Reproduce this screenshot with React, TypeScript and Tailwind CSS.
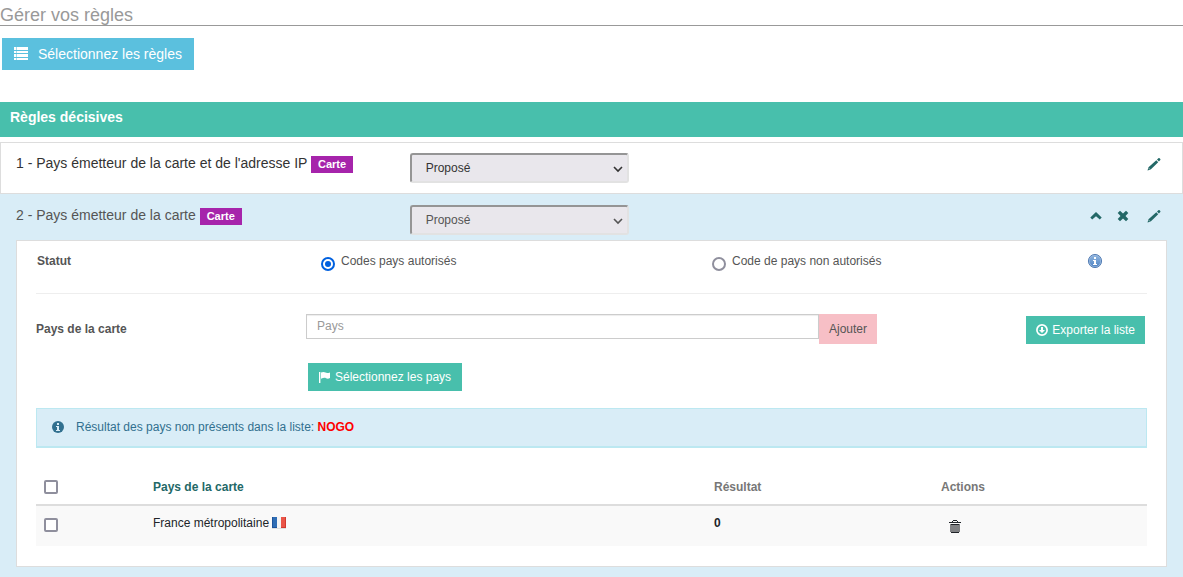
import type { ReactNode } from "react";

function ListIcon() {
  return (
    <svg className="size-3.5" viewBox="0 0 14 14" fill="currentColor" aria-hidden="true">
      <path d="M0 0h2v3H0zM3 0h11v3H3zM0 4h2v2H0zM3 4h11v2H3zM0 7h2v3H0zM3 7h11v3H3zM0 11h2v2H0zM3 11h11v2H3z" />
      <path d="M2 0h1v3H2zM2 4h1v2H2zM2 7h1v3H2zM2 11h1v2H2z" opacity=".45" />
    </svg>
  );
}

function PencilIcon() {
  return (
    <svg className="size-4" viewBox="0 0 16 16" fill="currentColor" aria-hidden="true">
      <path d="M1.500 14.500l1-3.300 7.800-7 1.900 2-7.500 7.200zM11 3.500l1.700-1.400q.5-.3.900.1l.7.800q.4.500 0 .9L12.900 5.500z" />
      <path d="M2.600 12l1.500 1.500" stroke="#fff" strokeWidth=".5" />
    </svg>
  );
}

function ChevronUpIcon() {
  return (
    <svg className="size-4" viewBox="0 0 16 16" fill="currentColor" aria-hidden="true">
      <path d="M8 4l5.700 5.400-1.900 2.200L8 8.200l-3.800 3.400-1.900-2.200z" />
    </svg>
  );
}

function CrossIcon() {
  return (
    <svg className="size-4" viewBox="0 0 16 16" fill="currentColor" aria-hidden="true">
      <path d="M5 2.700L8 5.500l3-2.800L13.300 5 10.500 8l2.800 3L11 13.300l-3-2.800-3 2.800L2.700 11l2.800-3-2.800-3z" />
    </svg>
  );
}

function InfoIcon() {
  return (
    <svg className="size-3" viewBox="0 0 12 12" aria-hidden="true">
      <circle cx="6" cy="6" r="6" fill="currentColor" />
      <path d="M5 2h2v2H5zM4 5h3v4h1v1H4V9h1V6H4z" fill="#d9edf7" />
    </svg>
  );
}

function HelpBadge() {
  return (
    <svg className="size-4" viewBox="0 0 16 16" aria-hidden="true">
      <defs>
        <linearGradient id="help-fill" x1="0" y1="0" x2="0" y2="1">
          <stop offset="0" stopColor="#8fb4de" />
          <stop offset="1" stopColor="#5387c5" />
        </linearGradient>
      </defs>
      <circle cx="8" cy="8" r="6.600" fill="#9dbbe0" stroke="#4a75ae" strokeWidth=".9" />
      <circle cx="8" cy="8" r="5.500" fill="url(#help-fill)" />
      <path d="M7 4h2v2H7zM6 7h3v4h1v1H6v-1h1V8H6z" fill="#fff" />
    </svg>
  );
}

function FlagIcon() {
  return (
    <svg className="size-3" viewBox="0 0 12 12" fill="currentColor" aria-hidden="true">
      <path d="M0 1h1v11H0zM2 1.600c2-1 3.500-.6 4.500 0s2.500.6 4.500-.2V7c-1.500.9-3 .8-4 .2S4.500 6.600 2 7.700z" />
      <path d="M1 1h1v11H1z" opacity=".4" />
    </svg>
  );
}

function DownloadIcon() {
  return (
    <svg className="size-3" viewBox="0 0 12 12" fill="none" aria-hidden="true">
      <circle cx="6" cy="6" r="5.100" stroke="currentColor" strokeWidth="1.700" />
      <path d="M5 3h2v3h2L6 9 3 6h2z" fill="currentColor" />
    </svg>
  );
}

function TrashIcon() {
  return (
    <svg className="h-4 w-3" viewBox="0 0 12 16" aria-hidden="true">
      <path d="M1 6h10v8H1z" fill="#808183" />
      <path d="M4 2h4v1H4zM0 4h12v1H0zM3 3h1v1H3zM8 3h1v1H8zM2 6h8v1H2zM2 14h8v1H2z" fill="#1f2328" />
    </svg>
  );
}

function FrenchFlag() {
  return (
    <svg className="inline-block h-3 w-3.5 align-[-2px]" viewBox="0 0 14 12" role="img" aria-label="France">
      <path d="M0 0h14v11H0z" fill="#f4f4f4" />
      <path d="M0 0h5v11H0z" fill="#2f6db5" />
      <path d="M9 0h5v11H9z" fill="#ea5548" />
      <path d="M0 0h1v11H0zM0 10h5v1H0z" fill="#1d539b" />
      <path d="M13 0h1v11h-1zM9 10h5v1H9z" fill="#d03a30" />
      <path d="M0 11h14v1H0z" fill="#dedede" />
    </svg>
  );
}

function IconButton({ label, children }: { label: string; children: ReactNode }) {
  return (
    <button type="button" aria-label={label} className="flex text-[#236867] last:ml-1">
      {children}
    </button>
  );
}

function RuleHeader({ title, actions }: { title: string; actions: ReactNode }) {
  return (
    <div className="flex items-start">
      <h3 className="w-1/3 pt-2.5 text-sm leading-5">
        {title}{" "}
        <span className="inline-block bg-[#a624ab] px-[7px] text-[11px] leading-[17px] font-bold text-white">
          Carte
        </span>
      </h3>
      <div className="relative mt-2.5 ml-[5px] w-[219px]">
        <select
          aria-label={title}
          className="block h-[30px] w-full appearance-none rounded-[3px] border-2 border-t-[#959595] border-r-[#e2e2e2] border-b-[#e2e2e2] border-l-[#959595] bg-[#e9e7ec] px-3.5 text-xs"
        >
          <option>Proposé</option>
        </select>
        <svg
          className="pointer-events-none absolute top-3 right-1.5 h-2 w-2.5"
          viewBox="0 0 10 8"
          fill="none"
          stroke="currentColor"
          strokeWidth="1.600"
          aria-hidden="true"
        >
          <path d="M1 2l4 4 4-4" />
        </svg>
      </div>
      <div className="ml-auto flex gap-[11px] pt-[13px] pr-5">{actions}</div>
    </div>
  );
}

export default function App() {
  return (
    <main className="font-['Liberation_Sans',Arial,sans-serif] text-xs text-[#333]">
      <h1 className="border-b border-[#999] pt-[5px] text-lg leading-5 text-[#999]">Gérer vos règles</h1>
      <div className="pt-3 pl-0.5">
        <button type="button" className="flex h-8 items-center gap-2.5 bg-[#5bc0de] px-3 text-sm text-white">
          <ListIcon />
          Sélectionnez les règles
        </button>
      </div>

      <h2 className="mt-8 bg-[#48bfac] px-2.5 pt-[5px] pb-[9px] text-sm leading-[21px] font-bold text-white">
        Règles décisives
      </h2>

      <section className="mt-[5px] h-[52px] border border-[#ddd] pl-[15px]">
        <RuleHeader
          title="1 - Pays émetteur de la carte et de l'adresse IP"
          actions={
            <IconButton label="Modifier">
              <PencilIcon />
            </IconButton>
          }
        />
      </section>

      <section className="bg-[#d9edf7] px-4 pb-4 text-[#555]">
        <div className="-mr-[15px] h-[46px] pt-px">
          <RuleHeader
            title="2 - Pays émetteur de la carte"
            actions={
              <>
                <IconButton label="Réduire">
                  <ChevronUpIcon />
                </IconButton>
                <IconButton label="Supprimer">
                  <CrossIcon />
                </IconButton>
                <IconButton label="Modifier">
                  <PencilIcon />
                </IconButton>
              </>
            }
          />
        </div>

        <div className="border border-[#ddd] bg-white px-[19px] pb-5">
          <fieldset className="flex h-[53px] border-b border-[#eee] pt-3 pl-px leading-4">
            <legend className="float-left w-[284px] font-bold">Statut</legend>
            <label className="flex w-[391px] gap-1.5">
              <input
                type="radio"
                name="statut"
                defaultChecked
                className="mt-1 size-3.5 shrink-0 appearance-none rounded-full border-2 border-[#8f8f9d] bg-white checked:border-[#0060df] checked:bg-[#0060df] checked:bg-clip-content checked:p-0.5"
              />
              Codes pays autorisés
            </label>
            <label className="flex gap-1.5">
              <input
                type="radio"
                name="statut"
                className="mt-1 size-3.5 shrink-0 appearance-none rounded-full border-2 border-[#8f8f9d] bg-white checked:border-[#0060df] checked:bg-[#0060df] checked:bg-clip-content checked:p-0.5"
              />
              Code de pays non autorisés
            </label>
            <button type="button" aria-label="Aide" className="mr-11 ml-auto flex self-start">
              <HelpBadge />
            </button>
          </fieldset>

          <div className="flex items-start pt-5">
            <label htmlFor="pays" className="w-[270px] pt-[7px] leading-4 font-bold">
              Pays de la carte
            </label>
            <div className="w-[571px]">
              <div className="flex items-start">
                <input
                  id="pays"
                  placeholder="Pays"
                  className="h-[25px] min-w-0 flex-1 border border-[#ccc] px-2.5 pb-0.5 shadow-[inset_0_1px_1px_rgba(0,0,0,0.075)] placeholder:text-[#999]"
                />
                <button type="button" className="h-[30px] bg-[#f7bfc6] px-2.5">
                  Ajouter
                </button>
              </div>
              <button
                type="button"
                className="mt-[19px] ml-0.5 flex h-7 items-center gap-1 bg-[#48bfac] px-[11px] text-white"
              >
                <FlagIcon />
                Sélectionnez les pays
              </button>
            </div>
            <button
              type="button"
              className="mt-0.5 mr-0.5 ml-auto flex h-7 items-center gap-1 bg-[#48bfac] px-2.5 text-white"
            >
              <DownloadIcon />
              Exporter la liste
            </button>
          </div>

          <p className="mt-[17px] flex h-10 items-center gap-3 border border-b-2 border-[#bce8f1] bg-[#d9edf7] px-[15px] pb-0.5 text-[#31708f]">
            <InfoIcon />
            <span>
              Résultat des pays non présents dans la liste: <strong className="text-[#f00]">NOGO</strong>
            </span>
          </p>

          <table className="mt-[22px] w-full table-fixed text-left">
            <colgroup>
              <col className="w-[109px]" />
              <col />
              <col className="w-[227px]" />
              <col className="w-[214px]" />
            </colgroup>
            <thead>
              <tr className="h-[35px] border-b-2 border-[#ddd] text-[#777]">
                <th className="pl-2">
                  <input
                    type="checkbox"
                    aria-label="Tout sélectionner"
                    className="block size-3.5 appearance-none rounded-xs border-2 border-[#8f8f9d] bg-white checked:bg-[#0060df]"
                  />
                </th>
                <th className="pl-2 text-[#236867]">Pays de la carte</th>
                <th className="pl-2">Résultat</th>
                <th className="pl-2">Actions</th>
              </tr>
            </thead>
            <tbody>
              <tr className="h-[41px] bg-[#f9f9f9] align-top text-[#212529]">
                <td className="pt-3 pl-2">
                  <input
                    type="checkbox"
                    aria-label="France métropolitaine"
                    className="block size-3.5 appearance-none rounded-xs border-2 border-[#8f8f9d] bg-white checked:bg-[#0060df]"
                  />
                </td>
                <td className="pt-[9px] pl-2">
                  France métropolitaine <FrenchFlag />
                </td>
                <td className="pt-[9px] pl-2 font-bold">0</td>
                <td className="pt-3 pl-4">
                  <button type="button" aria-label="Supprimer" className="flex">
                    <TrashIcon />
                  </button>
                </td>
              </tr>
            </tbody>
          </table>
        </div>
      </section>
    </main>
  );
}
